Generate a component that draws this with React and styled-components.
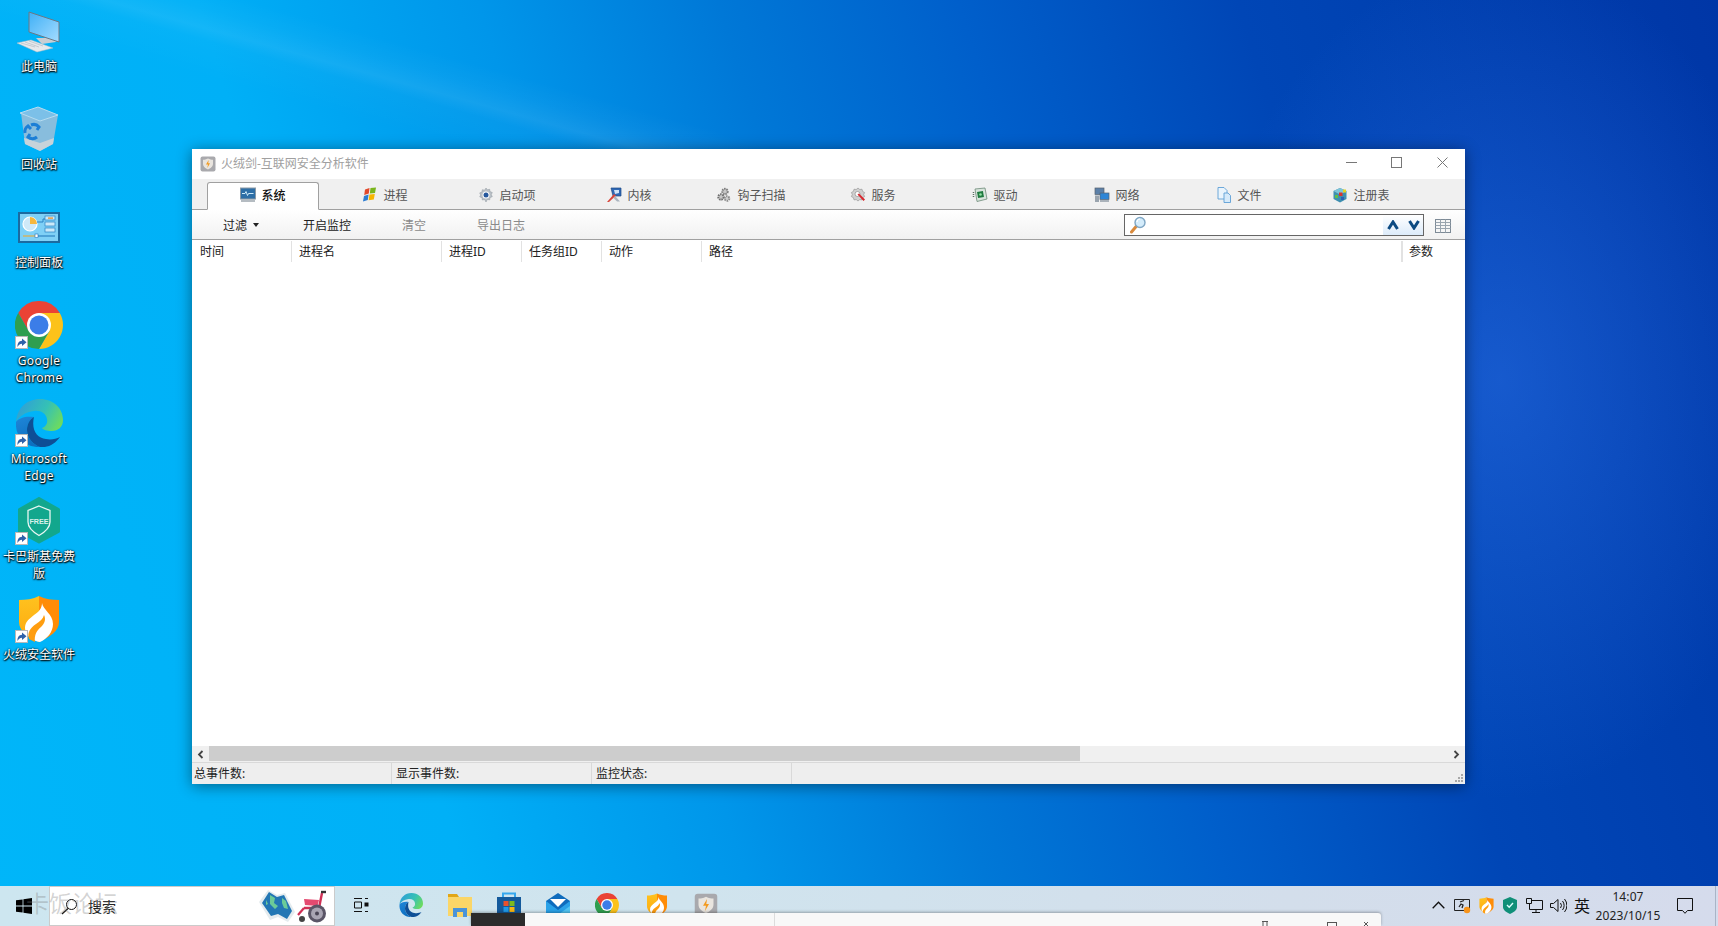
import React from "react";
import styled, { createGlobalStyle } from "styled-components";

const Global = createGlobalStyle`
  html, body { margin: 0; padding: 0; overflow: hidden; }
  body { font-family: "Noto Sans", "Noto Sans CJK SC", sans-serif; font-size: 12px; }
  * { box-sizing: border-box; }
`;

const Desktop = styled.div`
  position: relative;
  width: 1718px;
  height: 926px;
  overflow: hidden;
  display: flex;
  flex-direction: column;
  background:
    linear-gradient(195.5deg, transparent 255px, rgba(255,255,255,.03) 275px, rgba(255,255,255,.08) 293px, rgba(255,255,255,.025) 305px, transparent 340px) 0 0 / 1200px 300px no-repeat,
    radial-gradient(ellipse 300px 420px at 1500px 380px, rgba(50,120,240,.45), transparent),
    linear-gradient(73deg, #00b6f9 0%, #00b0f7 24%, #0096ea 38%, #0078d7 50%, #005fcb 62%, #0046b6 76%, #0036a6 100%);
`;

const IconColumn = styled.div`
  flex: 1;
  width: 78px;
  display: flex;
  flex-direction: column;
`;

const DeskItem = styled.div`
  height: 98px;
  width: 78px;
  padding-top: 7px;
  display: flex;
  flex-direction: column;
  align-items: center;
  gap: 3px;
`;

const DeskGlyph = styled.div`
  position: relative;
  width: 48px;
  height: 48px;
  flex: none;
  svg { display: block; }
`;

const DeskLabel = styled.div`
  width: 76px;
  text-align: center;
  color: #fff;
  line-height: 17px;
  letter-spacing: ${(p) => (p.$latin ? "0.35px" : "0")};
  text-shadow: 0 1px 2px #000, 0 0 2px #000, 1px 1px 1px rgba(0,0,0,.7);
  overflow-wrap: anywhere;
`;

const Shortcut = styled.svg`
  position: absolute;
  left: 0;
  bottom: 0;
`;

const Window = styled.div`
  position: absolute;
  left: 192px;
  top: 149px;
  width: 1273px;
  height: 635px;
  background: #fff;
  display: flex;
  flex-direction: column;
  box-shadow: 0 2px 14px rgba(0, 0, 0, .45);
`;

const TitleBar = styled.div`
  height: 30px;
  flex: none;
  display: flex;
  align-items: center;
  padding-left: 8px;
  gap: 5px;
  color: #a0a0a0;
`;

const TitleText = styled.span`
  margin-bottom: 2px;
`;

const WindowButtons = styled.div`
  margin-left: auto;
  display: flex;
  align-self: flex-start;
`;

const WindowButton = styled.div`
  width: 45.5px;
  height: 27px;
  display: flex;
  align-items: center;
  justify-content: center;
`;

const TabStrip = styled.div`
  height: 31px;
  flex: none;
  background: #f0f0f0;
  border-bottom: 1px solid #a0a0a0;
  display: flex;
  align-items: flex-end;
  padding-left: 15px;
  gap: 10px;
`;

const Tab = styled.div`
  width: 112px;
  height: 28px;
  margin-bottom: -1px;
  padding-bottom: 2px;
  display: flex;
  align-items: center;
  justify-content: center;
  gap: 5px;
  color: ${(p) => (p.$active ? "#111" : "#555")};
  font-weight: ${(p) => (p.$active ? 500 : 400)};
  background: ${(p) => (p.$active ? "#fff" : "transparent")};
  border: 1px solid ${(p) => (p.$active ? "#a0a0a0" : "transparent")};
  border-bottom: 1px solid ${(p) => (p.$active ? "#fff" : "transparent")};
  border-radius: 3px 3px 0 0;
`;

const Toolbar = styled.div`
  height: 30px;
  flex: none;
  display: flex;
  align-items: center;
  padding: 0 14px 0 31px;
  background: linear-gradient(#ffffff, #f1f1f1);
  border-bottom: 1px solid #a0a0a0;
`;

const ToolButton = styled.div`
  color: ${(p) => (p.$disabled ? "#8a8a8a" : "#222")};
  margin-right: ${(p) => p.$gap || 51}px;
  display: flex;
  align-items: center;
  gap: 6px;
`;

const Caret = styled.span`
  width: 0;
  height: 0;
  border-left: 3.5px solid transparent;
  border-right: 3.5px solid transparent;
  border-top: 4px solid #222;
`;

const SearchBox = styled.div`
  margin-left: auto;
  width: 300px;
  height: 22px;
  border: 1px solid #666;
  background: #fff;
  display: flex;
  align-items: center;
  justify-content: space-between;
  padding-left: 5px;
  margin-top: 1px;
`;

const SearchArrows = styled.div`
  width: 40px;
  height: 20px;
  display: flex;
  align-items: center;
  justify-content: space-between;
  padding: 0 3px 0 4px;
  background: linear-gradient(#fff, #dcebfa);
  svg + svg { margin-left: 6px; }
`;

const GridButton = styled.div`
  margin-left: 11px;
  margin-top: 2px;
  display: flex;
`;

const TableHeader = styled.div`
  height: 22px;
  flex: none;
  display: flex;
  padding-top: 1px;
`;

const HeaderCell = styled.div`
  width: ${(p) => p.$w}px;
  padding-left: 7px;
  line-height: 21px;
  color: #222;
  border-right: ${(p) => (p.$last ? "none" : "1px solid #e2e2e2")};
  border-left: ${(p) => (p.$last ? "1px solid #e2e2e2" : "none")};
  &:first-child { padding-left: 8px; }
  ${(p) => p.$last && "padding-left: 6px;"}
`;

const TableBody = styled.div`
  flex: 1;
`;

const ScrollBar = styled.div`
  height: 16px;
  flex: none;
  display: flex;
  background: #f0f0f0;
`;

const ScrollArrow = styled.div`
  width: 17px;
  display: flex;
  align-items: center;
  justify-content: center;
  margin-left: ${(p) => (p.$end ? "auto" : 0)};
`;

const ScrollThumb = styled.div`
  width: 871px;
  height: 15px;
  background: #cdcdcd;
`;

const StatusBar = styled.div`
  position: relative;
  height: 22px;
  flex: none;
  display: flex;
  background: #eeeeee;
  border-top: 1px solid #d9d9d9;
`;

const StatusCell = styled.div`
  width: 200px;
  padding-left: 4px;
  line-height: 22px;
  color: #222;
  border-right: 1px solid #d9d9d9;
  &:first-child { padding-left: 2px; }
`;

const Grip = styled.svg`
  position: absolute;
  right: 1px;
  bottom: 1px;
`;

const Taskbar = styled.div`
  height: 40px;
  flex: none;
  display: flex;
  align-items: stretch;
  background: linear-gradient(90deg, #cde6f0 0%, #d0e4ee 40%, #d3deeb 75%, #d5dbec 100%);
`;

const StartButton = styled.div`
  width: 49px;
  display: flex;
  align-items: center;
  justify-content: center;
  padding-right: 2px;
  flex: none;
`;

const SearchField = styled.div`
  width: 286px;
  flex: none;
  display: flex;
  align-items: center;
  background: #fff;
  border: 1px solid #cbcbcb;
  padding-left: 11px;
  gap: 10px;
  color: #222;
  font-size: 14px;
`;

const SearchDecor = styled.div`
  margin-left: auto;
  margin-right: 7px;
  display: flex;
  align-items: center;
`;

const TaskSlot = styled.div`
  width: ${(p) => p.$w || 49.2}px;
  flex: none;
  display: flex;
  align-items: center;
  justify-content: center;
  padding-bottom: 2px;
`;

const Tray = styled.div`
  margin-left: auto;
  display: flex;
  align-items: stretch;
`;

const TraySlot = styled.div`
  width: 24px;
  display: flex;
  align-items: center;
  justify-content: center;
  padding-bottom: 2px;
  color: #111;
  font-size: ${(p) => p.$size || 12}px;
`;

const Clock = styled.div`
  width: 68px;
  text-align: center;
  line-height: 19px;
  padding-top: 1px;
  letter-spacing: .1px;
  color: #222;
`;

const ActionSlot = styled.div`
  width: 46px;
  display: flex;
  align-items: center;
  justify-content: center;
  padding-bottom: 1px;
`;

const ShowDesktop = styled.div`
  width: 10px;
  position: relative;
  &::after {
    content: "";
    position: absolute;
    left: 7px;
    top: 0;
    bottom: 0;
    width: 1px;
    background: #a9b4c6;
  }
`;

const Watermark = styled.div`
  position: absolute;
  left: 26px;
  top: 888px;
  font-size: 23px;
  line-height: 30px;
  color: rgba(120, 120, 120, .33);
  white-space: nowrap;
  pointer-events: none;
`;

const PeekWindow = styled.div`
  position: absolute;
  left: 471px;
  top: 913px;
  width: 910px;
  height: 13px;
  display: flex;
  background: #f8f8f8;
  border-radius: 0 3px 0 0;
  overflow: hidden;
  box-shadow: 0 -1px 3px rgba(0, 0, 0, .3);
`;

const PeekDark = styled.div`
  width: 54px;
  background: #2b2b2b;
`;

const PeekPane = styled.div`
  width: 250px;
  border-right: 1px solid #dcdcdc;
`;

const PeekControls = styled.svg`
  position: absolute;
  left: 780px;
  top: 0;
`;

/* icons */

const Sc = () => (
  <Shortcut width="13" height="13" viewBox="0 0 13 13">
    <rect x=".5" y=".5" width="12" height="12" fill="#fff" stroke="#b8b8b8" />
    <path d="M2.500 11c-.3-4 1.500-6 4.500-6.300V2.500L11.500 6.300 7 10V7.800C5.200 7.800 3.800 8.800 2.500 11z" fill="#2f62aa" />
  </Shortcut>
);

const PcIcon = () => (
  <svg width="48" height="48" viewBox="0 0 48 48">
    <defs>
      <linearGradient id="pcS" x1="0" y1="0" x2="1" y2="1">
        <stop offset="0" stopColor="#3fb0f6" />
        <stop offset="1" stopColor="#a5dcff" />
      </linearGradient>
    </defs>
    <path d="M21 31l19 0 1 4-14 2z" fill="#c9ced3" />
    <path d="M14 5l30 10v20L14 25z" fill="url(#pcS)" stroke="#6c7884" strokeWidth="1" />
    <path d="M2 36l14-3 22 8-16 4z" fill="#e6e9ec" stroke="#b5bcc2" strokeWidth=".5" />
    <path d="M6 36l14 4M10 35l14 5M14 34l14 5" stroke="#aeb6bd" strokeWidth=".6" />
  </svg>
);

const BinIcon = () => (
  <svg width="48" height="48" viewBox="0 0 48 48">
    <path d="M6 8l4 31 15 7 13-7 5-29-20 5z" fill="#8fbedb" fillOpacity=".95" />
    <path d="M9 33l16 5 14-5-1 6-13 7-15-7z" fill="#c7d3da" />
    <path d="M5 8L23 2l20 8-18 6z" fill="#7cc0e8" stroke="#b7dcf0" strokeWidth="1" />
    <path d="M16 20a7 7 0 0 1 8 2l-2 3M10 28a7 7 0 0 1 3-7l3 3M22 32a7 7 0 0 1-9 0l2-3" fill="none" stroke="#1c7fd6" strokeWidth="3" />
  </svg>
);

const PanelIcon = () => (
  <svg width="48" height="48" viewBox="0 0 48 48">
    <rect x="4" y="10" width="40" height="29" fill="#7fd0f6" stroke="#1b6aa0" strokeWidth="2" />
    <circle cx="15" cy="21" r="7" fill="#cfe9f8" stroke="#fff" strokeWidth="1.2" />
    <path d="M15 21v-7a7 7 0 0 1 7 7z" fill="#f6b73c" />
    <path d="M22 19h6v-3h2" fill="none" stroke="#2a82c4" />
    <rect x="30" y="13" width="10" height="4" fill="#cde9f8" stroke="#2a82c4" strokeWidth=".7" />
    <rect x="33" y="14.5" width="5" height="1.2" fill="#f08a1c" />
    <rect x="30" y="19" width="10" height="4" fill="#cde9f8" stroke="#2a82c4" strokeWidth=".7" />
    <rect x="30" y="25" width="10" height="4" fill="#cde9f8" stroke="#2a82c4" strokeWidth=".7" />
    <path d="M8 33h12" stroke="#f6a623" strokeWidth="1" />
    <path d="M23 33h17" stroke="#1f74b8" strokeWidth="1" />
    <rect x="20" y="31" width="3" height="3.6" fill="#fff" stroke="#1f74b8" strokeWidth=".6" />
  </svg>
);

const ChromeIcon = ({ size = 48 }) => (
  <svg width={size} height={size} viewBox="0 0 48 48">
    <path d="M3.2 12A24 24 0 0 1 44.78 12H24L13.6 30z" fill="#ea4335" />
    <path d="M44.78 12A24 24 0 0 1 24 48L34.4 30 24 12z" fill="#fcc21a" />
    <path d="M24 48A24 24 0 0 1 3.2 12L13.6 30h20.8z" fill="#2f9e4f" />
    <circle cx="24" cy="24" r="12" fill="#fff" />
    <circle cx="24" cy="24" r="9.5" fill="#3b7de8" />
  </svg>
);

const EdgeIcon = ({ size = 48, id = "e" }) => (
  <svg width={size} height={size} viewBox="0 0 48 48">
    <defs>
      <linearGradient id={id + "T"} x1="0" y1=".3" x2="1" y2=".7">
        <stop offset="0" stopColor="#2f9fd8" />
        <stop offset=".55" stopColor="#35c1b5" />
        <stop offset="1" stopColor="#6fdc5c" />
      </linearGradient>
      <linearGradient id={id + "B"} x1="0" y1="0" x2=".3" y2="1">
        <stop offset="0" stopColor="#1f86d8" />
        <stop offset="1" stopColor="#0d6fc0" />
      </linearGradient>
    </defs>
    <path d="M1 23C2 9 12 0 25 0c13 0 23 9 23 21 0 7-5 11-11 11-5 0-9-1-10-3 3-1 6-4 5-9-1-6-7-9-13-8C11 13 4 17 1 23z" fill={`url(#${id}T)`} />
    <path d="M1 23c-1 12 6 21 15 24 4 1 7 1 9 1-8-3-13-10-13-17 0-6 3-11 7-13-9-1-15 1-18 5z" fill={`url(#${id}B)`} />
    <path d="M19 18c-4 2-7 7-7 13 0 7 5 14 13 17 8 1 15-3 20-10-4 2-9 3-14 2-9-1-15-9-12-22z" fill="#0e4f96" />
  </svg>
);

const KasperskyIcon = () => (
  <svg width="48" height="48" viewBox="0 0 48 48">
    <path d="M24 1.500l19.500 11v22L24 45 4.500 34.500v-22z" fill="#12a78d" stroke="#12a78d" strokeWidth="3" strokeLinejoin="round" />
    <path d="M24 9l11 4.500V25c0 6-5 10-11 13.500C18 35 13 31 13 25V13.500z" fill="none" stroke="#e8f7f3" strokeWidth="1.300" />
    <text x="24" y="26.500" textAnchor="middle" fontFamily="Liberation Sans, sans-serif" fontWeight="700" fontSize="7.2" fill="#d8f2ec">FREE</text>
  </svg>
);

const FlameShield = ({ size = 48, id = "f" }) => (
  <svg width={size} height={size} viewBox="0 0 48 48">
    <defs>
      <linearGradient id={id + "L"} x1="0" y1="0" x2="0" y2="1">
        <stop offset="0" stopColor="#ffc21f" />
        <stop offset="1" stopColor="#fda90f" />
      </linearGradient>
    </defs>
    <path d="M24 1C18 4 11 5 4 5v22c0 9 9 15 20 20z" fill={`url(#${id}L)`} />
    <path d="M24 1c6 3 13 4 20 4v22c0 9-9 15-20 20z" fill="#ff8c07" />
    <path d="M27 8c1 7 11 11 11 21 0 8-6 15-13 18-7-1-15-6-15-14 0-6 4-9 9-13 5-3 8-7 8-12z" fill="#fff" />
    <path d="M14 44c-2-6 1-11 7-15 4-3 7-5 8-9 2 4 1 8-3 12-4 3-7 8-6 15z" fill="#ff9d0f" />
  </svg>
);

const HrIcon = ({ size = 16 }) => (
  <svg width={size} height={size} viewBox="0 0 16 16">
    <rect x=".5" y=".5" width="15" height="15" rx="2" fill="#a9a9ad" />
    <path d="M8 2.500c2 1 3.500 1.200 5 1.200v4c0 3-2.500 4.600-5 5.800-2.500-1.200-5-2.800-5-5.800v-4C4.500 3.700 6 3.500 8 2.500z" fill="#e9e5df" />
    <path d="M8.700 4L6 8.500h2L7.300 12 10 7.300H8.200z" fill="#f39a1f" />
  </svg>
);

const TabIcon = ({ name }) => {
  const s = { width: 16, height: 16, viewBox: "0 0 16 16" };
  switch (name) {
    case "system":
      return (
        <svg {...s}>
          <rect x=".5" y="1" width="15" height="11" fill="#2d6ea6" stroke="#8c9aa6" />
          <path d="M2 6.500h3l1-2 1.500 4 1-2h5" fill="none" stroke="#cfeaf8" strokeWidth="1" />
          <rect x="1" y="12" width="14" height="3" fill="#b5bcc2" />
        </svg>
      );
    case "process":
      return (
        <svg {...s}>
          <path d="M3 2.500l4.500-1.500-.7 5.500L2.200 8z" fill="#e2492b" />
          <path d="M8.500 1l5.500-.5-1 5.500-5.200.5z" fill="#7ab51d" />
          <path d="M2 9l4.600-1.500-.8 5.500L1 14.500z" fill="#2d7dd2" />
          <path d="M7.400 7.500l5.400-.6-1 5.600-5.200.8z" fill="#f7b500" />
        </svg>
      );
    case "startup":
      return (
        <svg {...s}>
          <path d="M8 1l1.400 1.800 2.300-.5.300 2.300 2.300.9-1 2.100 1 2.100-2.300.9-.3 2.300-2.300-.5L8 15l-1.400-2.500-2.300.5L4 10.700l-2.300-.9 1-1.800-1-2.100 2.300-.9.300-2.300 2.300.5z" fill="#b9c0c6" stroke="#8e979e" strokeWidth=".5" />
          <circle cx="8" cy="8" r="3.500" fill="#fff" />
          <circle cx="8" cy="8" r="2.500" fill="#24579c" />
        </svg>
      );
    case "kernel":
      return (
        <svg {...s}>
          <path d="M5 1h10v8l-8 0z" fill="#2f68b4" stroke="#1e4a86" strokeWidth=".7" />
          <path d="M8 3h5v3l-4 1z" fill="#cfe2f6" />
          <path d="M1 15L8 7l2 1.500L3 15z" fill="#d8453a" />
          <path d="M9 9l5 5.500h-3L7.500 11z" fill="#aab4bf" />
        </svg>
      );
    case "hook":
      return (
        <svg {...s}>
          <circle cx="9" cy="4.500" r="2.700" fill="#c8c8c8" stroke="#7d7d7d" strokeWidth="2" strokeDasharray="1.500 .8" />
          <circle cx="5" cy="10" r="2.700" fill="#c8c8c8" stroke="#6e6e6e" strokeWidth="2" strokeDasharray="1.500 .8" />
          <circle cx="11" cy="11.500" r="2.300" fill="#d0d0d0" stroke="#8a8a8a" strokeWidth="2" strokeDasharray="1.400 .8" />
        </svg>
      );
    case "service":
      return (
        <svg {...s}>
          <path d="M8 1l1.800 1.500 2.200-.3.600 2.200 2 1.100-.9 2 .9 2.100-2 1.100-.6 2.200-2.200-.3L8 14l-1.800-1.400-2.200.3-.6-2.200-2-1.100.9-2.100-.9-2 2-1.100.6-2.200 2.200.3z" fill="#cfcfcf" stroke="#8d8d8d" strokeWidth=".6" />
          <circle cx="7.500" cy="7" r="2.500" fill="#fff" stroke="#8d8d8d" strokeWidth=".7" />
          <path d="M7.500 7.500l6 6.500 1.500-1.500-6-6z" fill="#d9272e" />
        </svg>
      );
    case "driver":
      return (
        <svg {...s}>
          <path d="M3 2l10-1 2 11-10 2.500z" fill="#d8e4dc" stroke="#6d8a78" strokeWidth=".8" />
          <rect x="5.500" y="4.500" width="6" height="6" transform="rotate(-10 8.500 7.500)" fill="#1f7a3f" />
          <circle cx="8.500" cy="7.500" r="1.300" fill="#8fe0a4" />
          <path d="M1.500 5v6" stroke="#5d6f65" strokeWidth="1.500" strokeDasharray="1 1" />
        </svg>
      );
    case "network":
      return (
        <svg {...s}>
          <rect x="1" y="1" width="9" height="6.500" fill="#5c80a8" stroke="#56626e" strokeWidth=".7" />
          <rect x="6" y="6" width="9" height="6.500" fill="#2f86d6" stroke="#56626e" strokeWidth=".7" />
          <rect x="1" y="8.500" width="4" height="6.500" fill="#9aa4ae" />
          <rect x="6" y="13" width="9" height="2" fill="#aab2ba" />
        </svg>
      );
    case "file":
      return (
        <svg {...s}>
          <path d="M2 .5h6l3 3V12H2z" fill="#eaf4fc" stroke="#5f9fd6" strokeWidth=".9" />
          <path d="M8 6h4l2.500 2.500v7H8z" fill="#d6eafa" stroke="#5f9fd6" strokeWidth=".9" />
        </svg>
      );
    default:
      return (
        <svg {...s}>
          <path d="M8 1l6.500 3v8L8 15.500 1.500 12V4z" fill="#3f8fb0" />
          <path d="M8 1l6.500 3L8 7.500 1.500 4z" fill="#7fc4d8" />
          <rect x="7" y="5.500" width="3.500" height="3.500" fill="#d8352f" />
          <rect x="11" y="2.500" width="3" height="3" fill="#e6d421" />
          <rect x="3" y="8" width="3" height="3" fill="#5fc04a" />
          <rect x="9" y="10" width="3" height="3" fill="#2b62b4" />
        </svg>
      );
  }
};

const Magnifier = () => (
  <svg width="17" height="18" viewBox="0 0 17 18">
    <path d="M1.500 16l5-6" stroke="#d98a3c" strokeWidth="3" strokeLinecap="round" />
    <circle cx="10" cy="6.500" r="5" fill="#d4ecfb" stroke="#7fa6c4" strokeWidth="1.400" />
    <path d="M7 6a3 3 0 0 1 3-3" stroke="#fff" strokeWidth="1.200" fill="none" />
  </svg>
);

const Chevron = ({ up }) => (
  <svg width="12" height="10" viewBox="0 0 12 10">
    <path d={up ? "M1.500 9L6 2l4.500 7" : "M1.500 1L6 8l4.500-7"} fill="none" stroke="#0b4a82" strokeWidth="3" />
  </svg>
);

const GridIcon = () => (
  <svg width="16" height="14" viewBox="0 0 16 14">
    <rect x=".5" y=".5" width="15" height="13" fill="#f6f6f6" stroke="#7d8a96" />
    <path d="M.5 3.500h15M.5 6.500h15M.5 9.500h15M5.500.5v13M10.500.5v13" stroke="#9aa5af" />
  </svg>
);

const ScrollChevron = ({ right }) => (
  <svg width="7" height="9" viewBox="0 0 7 9">
    <path d={right ? "M1.500 1l3.500 3.500L1.500 8" : "M5.500 1L2 4.500 5.500 8"} fill="none" stroke="#444" strokeWidth="1.800" />
  </svg>
);

const MapEmoji = () => (
  <svg width="36" height="34" viewBox="0 0 36 34">
    <path d="M9 1l9 5 8-2 10 19-7 10-10-5-8 3L0 13z" fill="#e4ebee" />
    <path d="M10 3l8 5 7-2 8 16-5 8-9-5-7 2L3 14z" fill="#2377b4" />
    <path d="M11 6l5 3-1 5 4 3-3 3-5-5zM23 9l4 3 2 8-4-1-2-5zM7 11l2 4-2 1z" fill="#6ccb98" />
  </svg>
);

const WheelchairEmoji = () => (
  <svg width="32" height="33" viewBox="0 0 32 33">
    <path d="M27 3L24 18H9" fill="none" stroke="#d02f55" strokeWidth="2.400" />
    <path d="M26 2h5" stroke="#333" strokeWidth="2.400" />
    <path d="M9 9l15 1-1.500 6L10 15z" fill="#e44a70" />
    <path d="M9 18L3 25" stroke="#d02f55" strokeWidth="2.200" />
    <circle cx="22" cy="23.500" r="9" fill="#5a5566" />
    <circle cx="22" cy="23.500" r="6" fill="#a9a5b3" />
    <circle cx="22" cy="23.500" r="2" fill="#4a4555" />
    <circle cx="7" cy="29" r="3" fill="#444" />
  </svg>
);

const Line = ({ children, w = 20, h = 20 }) => (
  <svg width={w} height={h} viewBox={`0 0 ${w} ${h}`} fill="none" stroke="#111" strokeWidth="1">
    {children}
  </svg>
);

const FolderIcon = () => (
  <svg width="24" height="24" viewBox="0 0 24 24">
    <path d="M0 1h9l2 3H0z" fill="#e2a616" />
    <path d="M0 4h24v19H0z" fill="#fbd667" />
    <path d="M5 15h14v9H5z" fill="#4a94d8" />
    <path d="M9 19h6v5H9z" fill="#fbd667" />
  </svg>
);

const StoreIcon = () => (
  <svg width="24" height="26" viewBox="0 0 24 26">
    <path d="M6 5V1.500h12V5" fill="none" stroke="#35a7ee" strokeWidth="2" />
    <path d="M0 5h24v20H0z" fill="#145a9c" />
    <rect x="6.500" y="9" width="5" height="5" fill="#e8512c" />
    <rect x="12.500" y="9" width="5" height="5" fill="#7fba1e" />
    <rect x="6.500" y="15" width="5" height="5" fill="#1f9ae8" />
    <rect x="12.500" y="15" width="5" height="5" fill="#f8b612" />
  </svg>
);

const MailIcon = () => (
  <svg width="24" height="24" viewBox="0 0 24 24">
    <path d="M12 0L24 8v16H0V8z" fill="#0f6cbd" />
    <path d="M4 6h16l-8 8z" fill="#fff" />
    <path d="M0 8l12 9 12-9v16H0z" fill="#2aa2e8" />
    <path d="M24 24H9l15-11z" fill="#52c4f2" />
  </svg>
);

const desktopItems = [
  { label: "此电脑", icon: <PcIcon /> },
  { label: "回收站", icon: <BinIcon /> },
  { label: "控制面板", icon: <PanelIcon /> },
  { label: "Google Chrome", icon: <ChromeIcon />, shortcut: true, latin: true },
  { label: "Microsoft Edge", icon: <EdgeIcon />, shortcut: true, latin: true },
  { label: "卡巴斯基免费版", icon: <KasperskyIcon />, shortcut: true },
  { label: "火绒安全软件", icon: <FlameShield />, shortcut: true },
];

const tabs = [
  ["system", "系统"],
  ["process", "进程"],
  ["startup", "启动项"],
  ["kernel", "内核"],
  ["hook", "钩子扫描"],
  ["service", "服务"],
  ["driver", "驱动"],
  ["network", "网络"],
  ["file", "文件"],
  ["registry", "注册表"],
];

const columns = [
  ["时间", 100],
  ["进程名", 150],
  ["进程ID", 80],
  ["任务组ID", 80],
  ["动作", 100],
  ["路径", 700],
];

export default function App() {
  return (
    <Desktop>
      <Global />
      <IconColumn>
        {desktopItems.map((item) => (
          <DeskItem key={item.label}>
            <DeskGlyph>
              {item.icon}
              {item.shortcut && <Sc />}
            </DeskGlyph>
            <DeskLabel $latin={item.latin}>{item.label}</DeskLabel>
          </DeskItem>
        ))}
      </IconColumn>

      <Window>
        <TitleBar>
          <HrIcon />
          <TitleText>火绒剑-互联网安全分析软件</TitleText>
          <WindowButtons>
            <WindowButton>
              <Line w={11} h={11}><path d="M0 5.500h11" stroke="#777" /></Line>
            </WindowButton>
            <WindowButton>
              <Line w={11} h={11}><rect x=".5" y=".5" width="10" height="10" stroke="#777" /></Line>
            </WindowButton>
            <WindowButton>
              <Line w={11} h={11}><path d="M.5.500l10 10M10.500.500l-10 10" stroke="#777" /></Line>
            </WindowButton>
          </WindowButtons>
        </TitleBar>

        <TabStrip>
          {tabs.map(([name, label], i) => (
            <Tab key={name} $active={i === 0}>
              <TabIcon name={name} />
              {label}
            </Tab>
          ))}
        </TabStrip>

        <Toolbar>
          <ToolButton $gap={44}>
            过滤 <Caret />
          </ToolButton>
          <ToolButton>开启监控</ToolButton>
          <ToolButton $disabled>清空</ToolButton>
          <ToolButton $disabled>导出日志</ToolButton>
          <SearchBox>
            <Magnifier />
            <SearchArrows>
              <Chevron up />
              <Chevron />
            </SearchArrows>
          </SearchBox>
          <GridButton>
            <GridIcon />
          </GridButton>
        </Toolbar>

        <TableHeader>
          {columns.map(([label, w]) => (
            <HeaderCell key={label} $w={w}>{label}</HeaderCell>
          ))}
          <HeaderCell $w={63} $last>参数</HeaderCell>
        </TableHeader>
        <TableBody />

        <ScrollBar>
          <ScrollArrow>
            <ScrollChevron />
          </ScrollArrow>
          <ScrollThumb />
          <ScrollArrow $end>
            <ScrollChevron right />
          </ScrollArrow>
        </ScrollBar>
        <StatusBar>
          <StatusCell>总事件数:</StatusCell>
          <StatusCell>显示事件数:</StatusCell>
          <StatusCell>监控状态:</StatusCell>
          <Grip width="10" height="10" viewBox="0 0 10 10" fill="#a8a8a8">
            <rect x="7" y="1" width="2" height="2" />
            <rect x="4" y="4" width="2" height="2" />
            <rect x="7" y="4" width="2" height="2" />
            <rect x="1" y="7" width="2" height="2" />
            <rect x="4" y="7" width="2" height="2" />
            <rect x="7" y="7" width="2" height="2" />
          </Grip>
        </StatusBar>
      </Window>

      <Taskbar>
        <StartButton>
          <svg width="16" height="16" viewBox="0 0 16 16" fill="#000">
            <path d="M0 2.300l6.600-.9v6.200H0zM7.400 1.300L16 0v7.600H7.400zM0 8.400h6.600v6.200L0 13.700zM7.400 8.400H16V16l-8.600-1.300z" />
          </svg>
        </StartButton>
        <SearchField>
          <svg width="17" height="17" viewBox="0 0 17 17" fill="none" stroke="#111">
            <circle cx="10.500" cy="6.500" r="5" />
            <path d="M7 10.500L1 16" strokeWidth="1.300" />
          </svg>
          搜索
          <SearchDecor>
            <MapEmoji />
            <WheelchairEmoji />
          </SearchDecor>
        </SearchField>
        <TaskSlot $w={51}>
          <Line w={16} h={16}>
            <path d="M1 1.500h8M1 14.500h8M1.500 5h7v6h-7z" />
            <path d="M12 1.500h3M12 14.500h3" />
            <rect x="12" y="6" width="3" height="3" fill="#111" />
          </Line>
        </TaskSlot>
        <TaskSlot><EdgeIcon size={24} id="e2" /></TaskSlot>
        <TaskSlot><FolderIcon /></TaskSlot>
        <TaskSlot><StoreIcon /></TaskSlot>
        <TaskSlot><MailIcon /></TaskSlot>
        <TaskSlot><ChromeIcon size={24} /></TaskSlot>
        <TaskSlot><FlameShield size={24} id="f2" /></TaskSlot>
        <TaskSlot><HrIcon size={24} /></TaskSlot>

        <Tray>
          <TraySlot>
            <Line w={13} h={8}><path d="M.7 7.300L6.500 1.200l5.800 6.100" strokeWidth="1.300" /></Line>
          </TraySlot>
          <TraySlot>
            <svg width="17" height="17" viewBox="0 0 17 17" fill="none" stroke="#222">
              <path d="M.5 2.500h15v11H.5z" />
              <path d="M6 5l4-1.500M5 10l2-3 2 1-1 3" strokeWidth="1.300" />
              <circle cx="13" cy="13" r="3.200" fill="#f7931a" stroke="none" />
            </svg>
          </TraySlot>
          <TraySlot><FlameShield size={17} id="f3" /></TraySlot>
          <TraySlot>
            <svg width="14" height="17" viewBox="0 0 14 17">
              <path d="M7 0l7 3v7c0 3-3 5-7 7-4-2-7-4-7-7V3z" fill="#0f8f78" />
              <path d="M4 8l2.200 2.200L10 6" fill="none" stroke="#dff" strokeWidth="1.400" />
            </svg>
          </TraySlot>
          <TraySlot>
            <Line w={17} h={17}>
              <path d="M3.500 3.500h13v9h-13z" />
              <path d="M.5 1.500h5v5h-5z" fill="#d3deeb" />
              <path d="M10 12.500v3M6 15.500h8" />
            </Line>
          </TraySlot>
          <TraySlot>
            <Line w={17} h={15}>
              <path d="M.5 5.500h3L8 1.500v12l-4.500-4h-3z" />
              <path d="M10.500 5a4 4 0 0 1 0 5M12.500 3a7 7 0 0 1 0 9M14.500 1a10 10 0 0 1 0 13" />
            </Line>
          </TraySlot>
          <TraySlot $size={16}>英</TraySlot>
          <Clock>
            14:07
            <br />
            2023/10/15
          </Clock>
          <ActionSlot>
            <Line w={16} h={16}><path d="M.5.500h15v12h-5l-2.500 2.800L5.500 12.500h-5z" /></Line>
          </ActionSlot>
          <ShowDesktop />
        </Tray>
      </Taskbar>

      <Watermark>卡饭论坛</Watermark>

      <PeekWindow>
        <PeekDark />
        <PeekPane />
        <PeekControls width="120" height="13" viewBox="0 0 120 13" fill="none" stroke="#555">
          <path d="M12 9V13M16 9V13M11 8.500h6" />
          <rect x="76.500" y="9.500" width="9" height="9" />
          <path d="M117 9l-4 4M113 9l4 4" />
        </PeekControls>
      </PeekWindow>
    </Desktop>
  );
}
